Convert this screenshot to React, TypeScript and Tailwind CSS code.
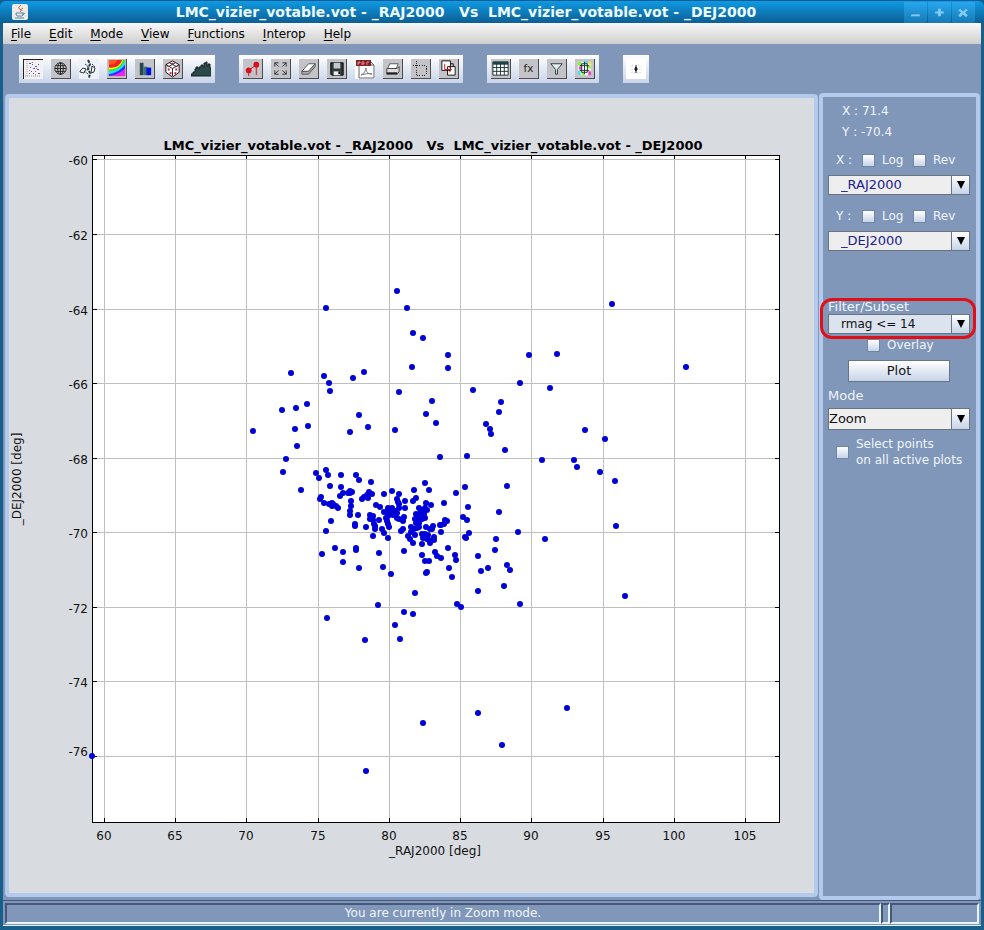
import React, { useState } from 'react';

const PLOT_TITLE = 'LMC_vizier_votable.vot - _RAJ2000   Vs  LMC_vizier_votable.vot - _DEJ2000';

const MENUS = ['File', 'Edit', 'Mode', 'View', 'Functions', 'Interop', 'Help'];

const X_TICKS = [
  { label: '60', at: 104 },
  { label: '65', at: 175 },
  { label: '70', at: 246 },
  { label: '75', at: 318 },
  { label: '80', at: 389 },
  { label: '85', at: 460 },
  { label: '90', at: 531 },
  { label: '95', at: 603 },
  { label: '100', at: 674 },
  { label: '105', at: 745 },
];

const Y_TICKS = [
  { label: '-60', at: 159, text: 165 },
  { label: '-62', at: 234, text: 240 },
  { label: '-64', at: 309, text: 315 },
  { label: '-66', at: 383, text: 389 },
  { label: '-68', at: 458, text: 464 },
  { label: '-70', at: 532, text: 538 },
  { label: '-72', at: 607, text: 613 },
  { label: '-74', at: 681, text: 687 },
  { label: '-76', at: 756, text: 756 },
];

// Source positions, already projected into the chart's viewBox
const POINTS = `
397,291 326,308 407,308 413,333 423,338 448,355 412,367 448,368 291,373 324,376 329,383 330,391
353,378 364,372 282,410 296,408 307,404 253,431 295,429 308,426 297,446 286,459 359,415 368,427
350,432 399,392 432,401 426,414 436,423 395,430 440,457 473,390 467,456 486,424 490,429 491,434
529,355 557,354 686,367 520,383 550,388 501,402 499,412 585,430 605,439 505,450 542,460 574,460
577,467 600,472 615,481 507,486 465,487 456,493 444,503 468,507 499,512 463,517 467,520 616,526
545,539 518,532 496,539 495,550 469,533 465,537 466,538 441,532 441,525 444,524 445,520 447,521
448,548 455,555 456,560 435,552 437,556 441,558 449,568 452,577 478,556 481,571 488,568 507,565
510,570 504,586 478,591 520,604 457,604 461,607 625,596 612,304 478,713 423,723 502,745 567,708
366,771 92,756 283,472 301,490 316,473 319,478 326,470 328,475 330,486 341,475 341,487 356,475
359,480 371,482 321,497 320,499 324,503 329,504 332,503 333,504 332,506 336,506 338,508 340,496
343,493 348,493 350,491 352,492 350,493 351,501 351,506 350,511 350,515 358,515 331,521 326,531
355,524 355,526 366,527 373,536 322,554 335,548 343,552 343,562 356,548 356,550 359,568 379,553
383,567 391,574 362,499 364,497 367,495 369,492 372,494 368,498 384,494 392,491 399,494 397,499
398,502 399,504 405,501 405,508 413,501 416,498 414,490 429,490 425,483 376,505 380,507 399,508
384,512 388,508 392,508 387,512 390,512 395,511 397,513 393,515 397,518 399,519 404,517 403,521
388,516 386,518 387,521 388,524 389,527 382,529 384,533 388,538 401,531 403,529 370,515 373,516
370,519 373,520 379,520 374,524 375,526 375,529 426,503 431,505 419,508 422,510 425,508 427,510
416,514 420,513 424,514 415,519 419,518 422,519 425,518 416,523 419,523 411,527 414,529 417,528
419,527 411,532 415,535 408,536 410,539 413,543 426,527 430,529 433,526 432,529 422,534 425,534
428,535 423,538 427,539 430,543 422,544 434,537 434,540 429,540 440,525 404,551 422,555 425,561
429,561 426,573 427,572 415,593 378,605 404,612 413,614 395,625 400,639 327,618 365,640`
  .trim()
  .split(/\s+/)
  .map((pair) => pair.split(',').map(Number));

/* ---------- toolbar glyphs, all on a 20x20 grid ---------- */

const ScatterGlyph = () => (
  <>
    <rect width="20" height="20" fill="#f4f1f4" />
    <path d="M0 0h20M0 0v20" stroke="#222" strokeWidth="2" />
    <path d="M4 2v16M2 17h16" stroke="#999" strokeDasharray="1 1" />
    <g fill="#5a58a8">
      <path d="M6 4h2v1H6zM9 5h1v1H9zM12 7h2v1h-2zM7 8h1v1H7zM10 9h2v1h-2zM14 10h2v1h-2zM8 12h1v1H8zM12 12h1v1h-1zM15 14h2v1h-2zM6 14h1v1H6zM15 5h1v1h-1zM10 14h1v1h-1z" />
    </g>
    <path d="M9 3h1v1H9zM13 9h1v1h-1zM6 11h1v1H6zM12 15h1v1h-1z" fill="#c66" />
  </>
);

const GlobeGlyph = () => (
  <g fill="none" stroke="#222">
    <circle cx="10" cy="10" r="6" />
    <ellipse cx="10" cy="10" rx="3" ry="6" />
    <path d="M4 10h12M10 4v12M5 7h10M5 13h10" />
  </g>
);

const SphereGlyph = () => (
  <>
    <rect width="20" height="20" fill="#eef1f8" />
    <g fill="none" stroke="#2c3c3c">
      <path d="M9 1l2 4-2 5 2 4-1 5" strokeWidth="2" strokeDasharray="3 1" />
      <path d="M1 12l3-3 3 1-2 4-4-1zM13 7l3 2-1 4-3 1z" />
      <path d="M6 5l3 2-1 5M13 5l3 3M5 12l4 3" strokeDasharray="2 1" />
    </g>
  </>
);

const DensityGlyph = () => (
  <>
    <rect x="2" y="1" width="17" height="17" fill="#e22" />
    <path d="M2 9Q13 10 16 1h3v17H2z" fill="#ff0" />
    <path d="M2 11Q14 11 17 1h2v17H2z" fill="#2e2" />
    <path d="M2 13Q14 12 18 3l1-1v16H2z" fill="#2df" />
    <path d="M2 16Q13 14 19 6v12H2z" fill="#23f" />
    <path d="M2 18Q14 16 19 10v8z" fill="#e2e" />
    <path d="M2 6Q8 7 11 1H2z" fill="#f52" />
  </>
);

const HistogramGlyph = () => (
  <>
    <path d="M5 4h4v13H5z" fill="#244a50" />
    <path d="M9 8h4v9H9z" fill="#3f7078" />
    <path d="M12 9h5v8h-5z" fill="#0010e0" />
  </>
);

const CubeGlyph = () => (
  <>
    <path d="M10 2l7 4v8l-7 5-7-5V6z" fill="#fff" stroke="#111" />
    <path d="M3 6l7 4 7-4M10 10v8M7 4l7 4M13 4L6 8" fill="none" stroke="#222" />
    <path d="M9 4h2v2H9zM5 10h2v2H5zM13 10h2v2h-2zM7 14h2v2H7zM12 14h2v2h-2zM4 7h2v1H4zM14 7h2v1h-2z" fill="#c0183c" />
  </>
);

const SpectrumGlyph = () => (
  <path
    d="M0 17v-2h2v-2h2v-3h1V8h2v2h1V8h2V6h2v2h1V4h2V3h1v4h1V5h2v4h1v6h1v2z"
    fill="#2b4a4a"
    stroke="#14211f"
    strokeWidth="1"
  />
);

const SplitGlyph = () => (
  <>
    <path d="M6 12v6M14 7v10" stroke="#d01020" strokeWidth="1" />
    <path d="M6 12L14 6" stroke="#d01020" strokeWidth="1" />
    <circle cx="6" cy="12" r="3" fill="#d8101c" />
    <circle cx="14" cy="6" r="3" fill="#d8101c" />
  </>
);

const RescaleGlyph = () => (
  <path
    d="M4 8V4h4M4 4l4 4M12 4h4v4M16 4l-4 4M4 12v4h4M4 16l4-4M12 16h4v-4M16 16l-4-4"
    fill="none"
    stroke="#333"
  />
);

const EraserGlyph = () => (
  <>
    <path d="M3 13l7-8h7l-7 8z" fill="#fff" stroke="#555" />
    <path d="M3 13h7l7-8v3l-7 8H3z" fill="#aaa" stroke="#555" />
  </>
);

const SaveGlyph = () => (
  <>
    <path d="M4 4h13v13H5l-1-1z" fill="#2c3c3c" stroke="#000" />
    <path d="M7 4h7v6H7z" fill="#c8c8c8" />
    <path d="M7 13h7v4H7z" fill="#eee" />
    <path d="M12 13h2v3h-2z" fill="#000" />
  </>
);

const PdfGlyph = () => (
  <>
    <rect width="20" height="20" fill="#fff" />
    <path d="M4 2h11l4 4v13H4z" fill="#fff" stroke="#666" />
    <path d="M15 2v4h4" fill="none" stroke="#555" />
    <path d="M6 16c3-1 5-5 5-7 0 4 2 6 6 6-4-1-7 0-11 1z" fill="none" stroke="#777" />
    <rect x="1" y="1" width="15" height="6" fill="#8c1c20" />
    <path d="M3 6V3h2v1H3M7 3v3M7 3h2v2H7M12 6V3h2" fill="none" stroke="#d09090" />
  </>
);

const PrintGlyph = () => (
  <>
    <path d="M7 5h9l-2 5H5z" fill="#fff" stroke="#555" />
    <path d="M4 10h11l2-2v5l-2 3H4z" fill="#ddd" stroke="#444" />
    <path d="M4 15h11" stroke="#222" strokeWidth="2" />
  </>
);

const SubsetGlyph = () => (
  <path
    d="M6 2v15M2 7h14M16 7v10M6 17h10"
    fill="none"
    stroke="#222"
    strokeDasharray="1 1"
    shapeRendering="crispEdges"
  />
);

const ReplotGlyph = () => (
  <>
    <path d="M3 2h9v10H3zM9 8h8v9H9z" fill="#fff" stroke="#111" />
    <path d="M12 5h3v3" fill="none" stroke="#111" />
    <path d="M6 5v6h7M11 9l2 2-2 3" fill="none" stroke="#d01818" strokeWidth="1" />
  </>
);

const TableGlyph = () => (
  <>
    <path d="M2 3h16v14H2z" fill="#fff" stroke="#1c3434" />
    <path d="M2 3h16v3H2z" fill="#1c4444" />
    <path d="M6 5v12M10 5v12M14 5v12M2 9h16M2 13h16" stroke="#1c3434" />
  </>
);

const FunctionGlyph = () => (
  <text x="10" y="14" textAnchor="middle" fontFamily="'DejaVu Sans', sans-serif" fontSize="11" fill="#222">
    fx
  </text>
);

const FilterGlyph = () => (
  <path d="M4 5h12l-5 6v5H9v-5z" fill="#e8f0f0" stroke="#223838" strokeWidth="1" />
);

const DensityGridGlyph = () => (
  <>
    <rect x="3" y="3" width="14" height="14" fill="#fff" />
    <path d="M3 3h4v4H3zM13 7h4v3h-4zM7 14h3v3H7z" fill="#9e4" />
    <path d="M9 2h5v3H9zM3 12h3v5H3z" fill="#5de" />
    <path d="M14 13h3v4h-3zM4 8h3v3H4z" fill="#e4c" />
    <path d="M14 3h3v3h-3z" fill="#fd3" />
    <path d="M7 5h6v9H7zM5 7h10M5 12h10M10 3v13" fill="none" stroke="#18342c" strokeWidth="1" />
  </>
);

const CrossGlyph = () => (
  <>
    <rect width="20" height="20" fill="#fff" />
    <path d="M10 6v8M8 10h4" stroke="#111" strokeWidth="1" />
    <path d="M9 8h2v4H9z" fill="#222" />
    <path d="M6 6h8v8H6z" fill="none" stroke="#ccc" strokeDasharray="1 2" />
  </>
);

interface Tool {
  label: string;
  glyph: React.ReactNode;
  flat?: boolean;
}

const TOOL_GROUPS: Tool[][] = [
  [
    { label: 'Scatter plot', glyph: <ScatterGlyph />, flat: true },
    { label: 'Sky plot', glyph: <GlobeGlyph /> },
    { label: 'Spherical plot', glyph: <SphereGlyph />, flat: true },
    { label: 'Density plot', glyph: <DensityGlyph /> },
    { label: 'Histogram', glyph: <HistogramGlyph /> },
    { label: '3D plot', glyph: <CubeGlyph /> },
    { label: 'Spectrum', glyph: <SpectrumGlyph />, flat: true },
  ],
  [
    { label: 'Split', glyph: <SplitGlyph /> },
    { label: 'Rescale', glyph: <RescaleGlyph /> },
    { label: 'Erase', glyph: <EraserGlyph /> },
    { label: 'Save', glyph: <SaveGlyph /> },
    { label: 'Export PDF', glyph: <PdfGlyph />, flat: true },
    { label: 'Print', glyph: <PrintGlyph /> },
    { label: 'Draw subset', glyph: <SubsetGlyph /> },
    { label: 'Replot', glyph: <ReplotGlyph /> },
  ],
  [
    { label: 'Table', glyph: <TableGlyph /> },
    { label: 'Function', glyph: <FunctionGlyph /> },
    { label: 'Filter', glyph: <FilterGlyph /> },
    { label: 'Colour map', glyph: <DensityGridGlyph /> },
  ],
  [{ label: 'Crosshair', glyph: <CrossGlyph />, flat: true }],
];

function TitleBar() {
  return (
    <header className="flex h-[23px] items-center rounded-t-md border-t border-[#0a5c94] bg-gradient-to-b from-[#0e9ae4] to-[#0c5f94] pr-[9px] pl-3">
      <svg viewBox="0 0 16 16" className="h-4 w-4 shrink-0">
        <rect width="16" height="16" rx="2" fill="#ececec" />
        <path d="M9 1q-4 3-1 4 2 2 0 3M11 4q-3 1-1 3" fill="none" stroke="#e0602c" strokeWidth="1" />
        <path d="M4 9h7q0 3-1 3H5q-1 0-1-3zM11 9q3 0 0 2" fill="none" stroke="#5c82a4" />
        <path d="M3 14h9" stroke="#5c82a4" />
      </svg>
      <h1 className="min-w-0 flex-1 overflow-hidden text-center text-sm font-bold whitespace-pre text-[#eefaff]">
        {PLOT_TITLE}
      </h1>
      <div className="flex gap-px">
        {[
          { label: 'Minimize', d: 'M7 13h9v2H7z' },
          { label: 'Maximize', d: 'M10 7h3v3h3v2h-3v3h-3v-3H7v-2h3z' },
          { label: 'Close', d: 'M8 7l3 3 3-3 2 2-3 2 3 3-2 2-3-3-3 3-2-2 3-3-3-2z' },
        ].map((btn) => (
          <button key={btn.label} aria-label={btn.label} className="h-[21px] w-[23px] bg-gradient-to-b from-[#28a8f0] to-[#1579b4]">
            <svg viewBox="0 0 23 22" className="h-full w-full">
              <path d={btn.d} fill="#84caf4" />
            </svg>
          </button>
        ))}
      </div>
    </header>
  );
}

function MenuBar() {
  return (
    <nav className="flex h-[21px] items-center gap-[18px] bg-gradient-to-b from-[#f8f8f8] to-[#cfcfcf] pl-2 text-black">
      {MENUS.map((menu) => (
        <button key={menu} className="underline-offset-2">
          <u>{menu[0]}</u>
          {menu.slice(1)}
        </button>
      ))}
    </nav>
  );
}

function Toolbar() {
  return (
    <div className="flex h-[49px] items-center gap-6 pl-4">
      {TOOL_GROUPS.map((group, idx) => (
        <div key={idx} className={`flex h-7 items-center gap-2 bg-gradient-to-b from-white to-[#c8d4e8] ${group.length === 1 ? 'px-[3px]' : 'px-1'}`}>
          {group.map((tool) => (
            <button
              key={tool.label}
              aria-label={tool.label}
              className={`h-5 w-5 ${tool.flat ? '' : 'border-r border-b border-[#4c4c50] bg-[#c4c4c8]'}`}
            >
              <svg viewBox="0 0 20 20" className="h-full w-full">
                {tool.glyph}
              </svg>
            </button>
          ))}
        </div>
      ))}
    </div>
  );
}

function ScatterPlot() {
  return (
    <svg viewBox="9 98 805 795" className="block w-full" fontFamily="'DejaVu Sans', sans-serif" fontSize="12" role="img" aria-label={PLOT_TITLE}>
      <text x="433" y="150" textAnchor="middle" fontSize="13" fontWeight="bold" xmlSpace="preserve" className="whitespace-pre">
        {PLOT_TITLE}
      </text>

      <g shapeRendering="crispEdges">
        <rect x="92" y="155" width="688" height="668" fill="#000" />
        <rect x="93" y="156" width="686" height="666" fill="#fff" />
        {X_TICKS.map((tick) => (
          <g key={tick.label}>
            <rect x={tick.at} y="156" width="1" height="666" fill="#bfbfbf" />
            <rect x={tick.at} y="156" width="1" height="4" />
            <rect x={tick.at} y="818" width="1" height="4" />
          </g>
        ))}
        {Y_TICKS.map((tick) => (
          <g key={tick.label}>
            <rect x="93" y={tick.at} width="686" height="1" fill="#bfbfbf" />
            <rect x="93" y={tick.at} width="4" height="1" />
            <rect x="775" y={tick.at} width="4" height="1" />
          </g>
        ))}
      </g>

      <g fill="#111">
        {X_TICKS.map((tick) => (
          <text key={tick.label} x={tick.at} y="840" textAnchor="middle">{tick.label}</text>
        ))}
        {Y_TICKS.map((tick) => (
          <text key={tick.label} x="88" y={tick.text} textAnchor="end">{tick.label}</text>
        ))}
        <text x="435" y="855" textAnchor="middle">_RAJ2000 [deg]</text>
        <text transform="translate(21 479) rotate(-90)" textAnchor="middle">_DEJ2000 [deg]</text>
      </g>

      <g fill="#0000d8">
        {POINTS.map(([x, y], idx) => (
          <circle key={idx} cx={x} cy={y} r="3" />
        ))}
      </g>
    </svg>
  );
}

function CheckBox({ id, children, className = '' }: { id: string; children: React.ReactNode; className?: string }) {
  return (
    <label htmlFor={id} className={`flex items-center gap-[7px] ${className}`}>
      <input
        id={id}
        type="checkbox"
        className="h-[13px] w-[13px] shrink-0 appearance-none border border-[#7186a4] bg-gradient-to-b from-white to-[#c6d4e8] checked:bg-[#33507c]"
      />
      <span>{children}</span>
    </label>
  );
}

function Combo({ id, label, options, className }: { id: string; label: string; options: string[]; className: string }) {
  const [value, setValue] = useState(options[0]);
  return (
    <div className={`flex border border-[#6a7480] ${className}`}>
      <select
        id={id}
        aria-label={label}
        value={value}
        onChange={(e) => setValue(e.target.value)}
        className="h-full min-w-0 flex-1 appearance-none bg-transparent outline-none"
      >
        {options.map((opt) => (
          <option key={opt}>{opt}</option>
        ))}
      </select>
      <span aria-hidden="true" className="flex w-[18px] items-center justify-center border-l border-[#6a7480] bg-gradient-to-b from-white to-[#c6d4e8]">
        <svg viewBox="0 0 8 8" className="h-2 w-2">
          <path d="M0 0h8L4 8z" fill="#000" />
        </svg>
      </span>
    </div>
  );
}

function AxisControls({ axis, column }: { axis: string; column: string }) {
  return (
    <div>
      <div className="flex h-5 items-center pl-2">
        <span className="w-[26px]">{axis} :</span>
        <CheckBox id={`${axis}-log`} className="w-[51px]">Log</CheckBox>
        <CheckBox id={`${axis}-rev`}>Rev</CheckBox>
      </div>
      <Combo id={`${axis}-column`} label={`${axis} column`} options={[column]} className="mt-[5px] h-5 bg-[#eeeeee] pl-3 text-[13px] text-[#20208c]" />
    </div>
  );
}

function SidePanel() {
  return (
    <aside className="w-[161px] shrink-0 rounded border-4 border-[#b4caec] pt-1 pr-[6px] pl-[5px] text-[#f0f5fc]">
      <div className="pl-[14px] leading-[21px]">
        <p>X : 71.4</p>
        <p>Y : -70.4</p>
      </div>

      <div className="mt-[7px] flex flex-col gap-[11px]">
        <AxisControls axis="X" column="_RAJ2000" />
        <AxisControls axis="Y" column="_DEJ2000" />
      </div>

      <div className="relative mt-12">
        <label htmlFor="subset" className="block text-[13px] leading-[15px]">Filter/Subset</label>
        <Combo id="subset" label="Filter/Subset" options={['rmag <= 14']} className="h-5 bg-[#dae3ee] pl-3 text-[#111]" />
        {/* highlight around the active subset */}
        <div className="pointer-events-none absolute -top-px -right-1.5 -left-2 h-[41px] rounded-xl border-[3px] border-[#e01018]" />
      </div>
      <CheckBox id="overlay" className="mt-[3px] h-4 pl-[39px]">Overlay</CheckBox>

      <button className="mx-auto mt-[7px] block h-[22px] w-[102px] border border-[#6a7480] bg-gradient-to-b from-white to-[#c6d4e8] text-[13px] text-[#111]">
        Plot
      </button>

      <label htmlFor="mode" className="mt-[6px] block text-[13px] leading-4">Mode</label>
      <Combo id="mode" label="Mode" options={['Zoom']} className="mt-1 h-[22px] bg-[#eeeeee] text-[13px] text-[#111]" />

      <CheckBox id="all-plots" className="mt-[6px] pl-2 leading-4 whitespace-nowrap">
        Select points
        <br />
        on all active plots
      </CheckBox>
    </aside>
  );
}

function StatusBar() {
  const field = 'h-[21px] border-2 border-t-[#47577a] border-l-[#47577a] border-r-[#e4f4fc] border-b-[#e4f4fc]';
  return (
    <footer className="flex h-[26px] items-center border-t border-b border-t-[#47577a] border-b-[#e4f4fc] px-0.5 text-[#f0f5fc]">
      <div className={`flex flex-1 items-center justify-center ${field}`}>You are currently in Zoom mode.</div>
      <div className={`w-[9px] ${field}`} />
      <div className={`w-[89px] ${field}`} />
    </footer>
  );
}

export default function App() {
  return (
    <div className="flex min-h-screen flex-col bg-[#195f8b] font-['DejaVu_Sans',sans-serif] text-xs">
      <TitleBar />
      <div className="mx-[3px] mb-1 flex flex-1 flex-col bg-[#8097b9]">
        <MenuBar />
        <Toolbar />
        <main className="flex flex-1 gap-px pr-px pl-0.5">
          <section className="mt-px mb-[3px] min-w-0 flex-1 rounded border-4 border-[#b4caec] bg-[#d8dce1]">
            <ScatterPlot />
          </section>
          <SidePanel />
        </main>
        <StatusBar />
      </div>
    </div>
  );
}
